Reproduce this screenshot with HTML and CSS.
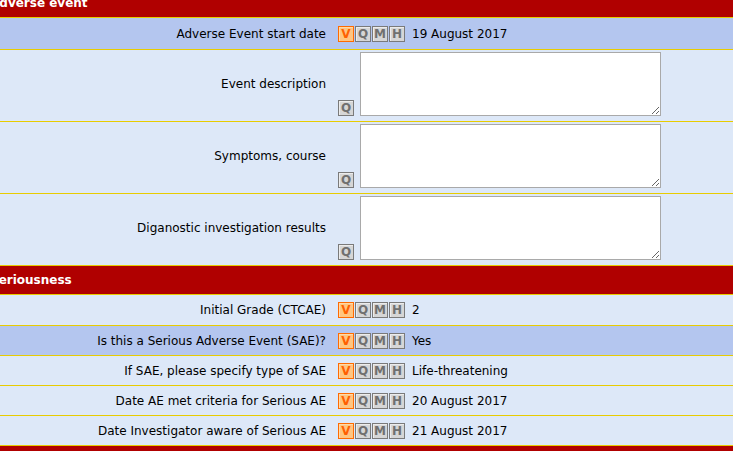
FILE: index.html
```html
<!DOCTYPE html>
<html lang="en">
<head>
    <meta charset="UTF-8">
    <title>Adverse event</title>
    <link rel="stylesheet" href="styles.css">
</head>
<body>
    <div class="form">
        <div class="section-head">Adverse event</div>

        <div class="row alt first">
            <div class="label">Adverse Event start date</div>
            <div class="field">
                <span class="flags"><b class="flag on">V</b><b class="flag">Q</b><b class="flag">M</b><b class="flag">H</b></span>
                <span class="value">19 August 2017</span>
            </div>
        </div>

        <div class="row tall">
            <div class="label">Event description</div>
            <div class="field bottom">
                <span class="flags"><b class="flag">Q</b></span>
                <textarea></textarea>
            </div>
        </div>

        <div class="row tall">
            <div class="label">Symptoms, course</div>
            <div class="field bottom">
                <span class="flags"><b class="flag">Q</b></span>
                <textarea></textarea>
            </div>
        </div>

        <div class="row tall">
            <div class="label">Diganostic investigation results</div>
            <div class="field bottom">
                <span class="flags"><b class="flag">Q</b></span>
                <textarea></textarea>
            </div>
        </div>

        <div class="section-head">Seriousness</div>

        <div class="row first">
            <div class="label">Initial Grade (CTCAE)</div>
            <div class="field">
                <span class="flags"><b class="flag on">V</b><b class="flag">Q</b><b class="flag">M</b><b class="flag">H</b></span>
                <span class="value">2</span>
            </div>
        </div>

        <div class="row alt">
            <div class="label">Is this a Serious Adverse Event (SAE)?</div>
            <div class="field">
                <span class="flags"><b class="flag on">V</b><b class="flag">Q</b><b class="flag">M</b><b class="flag">H</b></span>
                <span class="value">Yes</span>
            </div>
        </div>

        <div class="row">
            <div class="label">If SAE, please specify type of SAE</div>
            <div class="field">
                <span class="flags"><b class="flag on">V</b><b class="flag">Q</b><b class="flag">M</b><b class="flag">H</b></span>
                <span class="value">Life-threatening</span>
            </div>
        </div>

        <div class="row">
            <div class="label">Date AE met criteria for Serious AE</div>
            <div class="field">
                <span class="flags"><b class="flag on">V</b><b class="flag">Q</b><b class="flag">M</b><b class="flag">H</b></span>
                <span class="value">20 August 2017</span>
            </div>
        </div>

        <div class="row">
            <div class="label">Date Investigator aware of Serious AE</div>
            <div class="field">
                <span class="flags"><b class="flag on">V</b><b class="flag">Q</b><b class="flag">M</b><b class="flag">H</b></span>
                <span class="value">21 August 2017</span>
            </div>
        </div>

        <div class="section-head">Outcome</div>
    </div>
</body>
</html>
```

FILE: styles.css
```css
* {
    margin: 0;
    padding: 0;
    box-sizing: border-box;
}

body {
    font-family: "DejaVu Sans", Verdana, sans-serif;
    font-size: 12px;
    color: #000;
    background: #dde8f8;
    overflow: hidden;
}

.form {
    margin-top: -11px;
}

.section-head {
    height: 29px;
    line-height: 29px;
    background: #b00000;
    border-bottom: 1px solid #e8cc00;
    color: #fff;
    font-weight: bold;
    font-size: 12px;
    text-indent: -10px;
}

.row {
    display: grid;
    grid-template-columns: 338px 1fr;
    align-items: center;
    min-height: 30px;
    background: #dde8f8;
    border-bottom: 1px solid #e8cc00;
}

.row.first {
    min-height: 31px;
}

.row.alt.first {
    min-height: 32px;
}

.row.alt {
    background: #b4c6ef;
}

.row.tall {
    padding: 2px 0 5px;
}

.label {
    text-align: right;
    padding-right: 12px;
}

.field {
    display: flex;
    align-items: center;
    gap: 6px;
}

.field.bottom {
    align-items: flex-end;
}

.flags {
    display: flex;
    gap: 1px;
}

.flag {
    width: 16px;
    height: 16px;
    line-height: 14px;
    text-align: center;
    font-size: 12px;
    font-weight: bold;
    color: #707070;
    background: #d6d6d6;
    border: 1px solid #7a7a7a;
    box-shadow: inset 1px 1px 0 #ececec;
}

.flag.on {
    color: #ff6000;
    background: #ffc580;
    border-color: #ff6a00;
    box-shadow: inset 1px 1px 0 #ffd9a8;
}

.value {
    padding-left: 1px;
}

textarea {
    display: block;
    width: 301px;
    height: 64px;
    border: 1px solid #a9a9a9;
    background: #fff;
    font-family: inherit;
}
```
